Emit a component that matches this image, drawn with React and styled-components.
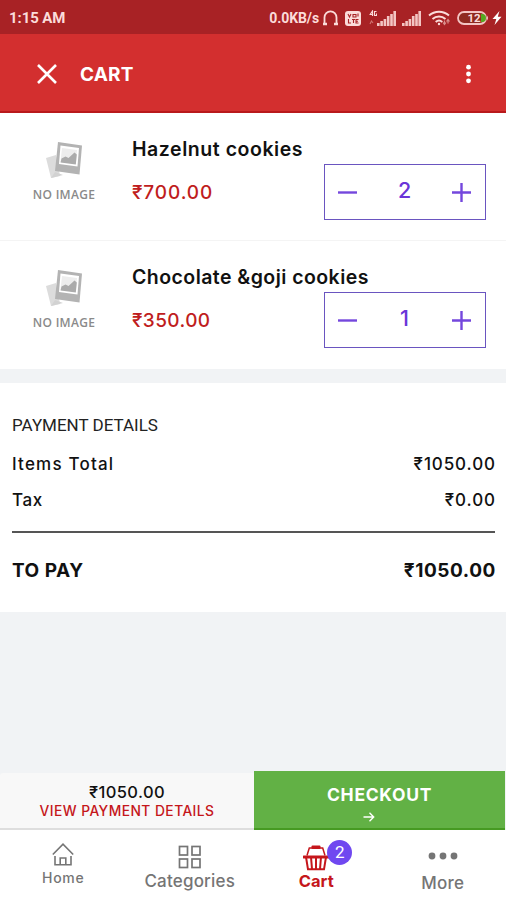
import React, { useState } from 'react';
import styled, { createGlobalStyle } from 'styled-components';

const GlobalStyle = createGlobalStyle`
  * { box-sizing: border-box; }
  body {
    margin: 0;
    background-color: #f1f3f5;
    font-family: Inter, 'Liberation Sans', sans-serif;
    color: #111;
  }
  button {
    padding: 0;
    border: 0;
    background: none;
    font-family: inherit;
    color: inherit;
  }
  svg { display: block; flex: none; }
`;

const Page = styled.div`
  width: 506px;
  height: 900px;
  display: flex;
  flex-direction: column;
  overflow: hidden;
  white-space: nowrap;
`;

/* status bar */
const StatusBar = styled.div`
  height: 34px;
  padding: 2px 4px 0 9px;
  display: flex;
  align-items: center;
  justify-content: space-between;
  background-color: #a82225;
  color: #fbdcda;
  font-family: Roboto, sans-serif;
  font-weight: 700;
`;
const Clock = styled.span`
  font-size: 15px;
  letter-spacing: -0.1px;
`;
const StatusIcons = styled.div`
  display: flex;
  align-items: center;
`;
const Speed = styled.span`
  font-size: 14px;
  letter-spacing: -0.1px;
  margin-right: 3px;
`;
const StatusIcon = styled.svg`
  margin-right: ${props => props.$gap || 0}px;
`;

/* header */
const Header = styled.header`
  height: 79px;
  padding: 2px 28px 0 37px;
  display: flex;
  align-items: center;
  background-color: #d32f2f;
  border-bottom: 2px solid #b9191c;
  color: #fff;
`;
const HeaderTitle = styled.h1`
  flex: 1;
  margin: 0 0 0 23px;
  padding-top: 1px;
  font-size: 19px;
  font-weight: 700;
  letter-spacing: 0.2px;
`;

/* cart items */
const Item = styled.div`
  height: 128px;
  display: flex;
  background-color: #fff;
  border-bottom: 1px solid ${props => (props.$last ? '#fff' : '#f4f4f4')};
`;
const Thumb = styled.div`
  width: 132px;
  padding: 29px 4px 0 0;
  display: flex;
  flex-direction: column;
  align-items: center;
  gap: 7px;
`;
const NoImage = styled.span`
  font-family: 'Open Sans', sans-serif;
  font-size: 12px;
  line-height: 18px;
  font-weight: 600;
  letter-spacing: 0.3px;
  color: #8a8a8a;
`;
const ItemBody = styled.div`
  flex: 1;
  padding: 23px 20px 0 0;
`;
const ItemName = styled.div`
  height: 28px;
  padding-top: 1px;
  line-height: 24px;
  font-size: 19.5px;
  font-weight: 600;
  letter-spacing: ${props => props.$ls}px;
`;
const ItemRow = styled.div`
  display: flex;
  align-items: center;
  justify-content: space-between;
`;
const Price = styled.span`
  font-size: 19px;
  font-weight: 500;
  letter-spacing: ${props => props.$ls}px;
  color: #bf1d20;
`;
const Stepper = styled.div`
  width: 162px;
  height: 56px;
  padding: 0 13px 0 12px;
  display: flex;
  align-items: center;
  justify-content: space-between;
  border: 1.5px solid #6a55c0;
  color: #7447dd;
`;
const Count = styled.span`
  padding-bottom: 4px;
  font-size: 21.5px;
  line-height: 26px;
  font-weight: 500;
  color: #6a35d8;
`;

/* payment */
const Payment = styled.section`
  height: 229px;
  margin-top: 14px;
  padding: 30px 11px 0 12px;
  background-color: #fff;
`;
const PaymentTitle = styled.h2`
  margin: 0 0 9px;
  font-family: Roboto, sans-serif;
  font-size: 17px;
  line-height: 24px;
  font-weight: 400;
  color: #222;
`;
const PaymentRow = styled.div`
  display: flex;
  align-items: center;
  justify-content: space-between;
  height: 36px;
  font-size: 17px;
  font-weight: 500;
  letter-spacing: 0.9px;
`;
const PaymentLabel = styled.span`
  letter-spacing: ${props => props.$ls}px;
`;
const PaymentAmount = styled.span`
  margin-right: -0.9px;
`;
const Line = styled.div`
  height: 2px;
  margin: 13px 0 19px;
  background-color: #555;
`;
const TotalRow = styled(PaymentRow)`
  font-size: 19px;
  font-weight: 700;
  letter-spacing: 0.55px;
`;

/* bottom */
const Bottom = styled.div`
  height: 59px;
  margin-top: auto;
  padding-right: 1px;
  display: flex;
  align-items: flex-end;
`;
const Summary = styled.div`
  width: 254px;
  height: 57px;
  padding-top: 9px;
  display: flex;
  flex-direction: column;
  align-items: center;
  background-color: #f8f8f8;
  border-bottom: 2px solid #dedede;
  border-top-left-radius: 3px;
`;
const SummaryPrice = styled.span`
  font-size: 16.5px;
  line-height: 21px;
  font-weight: 500;
  letter-spacing: 0.4px;
`;
const ViewDetails = styled.button`
  font-size: 13.8px;
  line-height: 17px;
  font-weight: 500;
  letter-spacing: 0.45px;
  color: #c5161b;
`;
const Checkout = styled.button`
  flex: 1;
  height: 59px;
  padding-top: 12px;
  display: flex;
  flex-direction: column;
  align-items: center;
  gap: 5px;
  background-color: #62b145;
  border-bottom: 2px solid #469a22;
  color: #fff;
  font-size: 17.5px;
  line-height: 24px;
  font-weight: 700;
  letter-spacing: 0.7px;
`;
const CheckoutArrow = styled.svg`
  margin-right: 22px;
`;

const Nav = styled.nav`
  height: 70px;
  display: grid;
  grid-template-columns: repeat(4, 1fr);
  background-color: #fff;
`;
const NavItem = styled.button`
  display: flex;
  flex-direction: column;
  align-items: center;
  padding-top: ${props => props.$top}px;
  color: ${props => (props.$active ? '#c5161b' : '#757575')};
`;
const NavLabel = styled.span`
  margin-top: ${props => props.$gap}px;
  font-size: ${props => props.$size || 17}px;
  line-height: 20px;
  font-weight: ${props => props.$weight || 500};
  letter-spacing: ${props => props.$ls || 0}px;
`;
const CartIcon = styled.div`
  position: relative;
`;
const Badge = styled.span`
  position: absolute;
  left: 24px;
  top: -5px;
  width: 25px;
  height: 25px;
  border-radius: 50%;
  background-color: #7048f0;
  color: #fff;
  font-family: Roboto, sans-serif;
  font-size: 17px;
  line-height: 25px;
  text-align: center;
`;

const Signal = ({ gap }) => (
  <StatusIcon $gap={gap} width="19" height="15" viewBox="0 0 19 15" fill="#f3c5c3">
    <rect x="0" y="12" width="2.6" height="3" />
    <rect x="3.3" y="10" width="2.6" height="5" />
    <rect x="6.6" y="8" width="2.6" height="7" />
    <rect x="9.9" y="5" width="2.6" height="10" />
    <rect x="13.2" y="3" width="2.6" height="12" />
    <rect x="16.4" y="0" width="2.6" height="15" />
  </StatusIcon>
);

const Placeholder = () => (
  <svg width="38" height="37" viewBox="0 0 38 37">
    <path d="M1 16l10-3 4 21-9 2z" fill="#dcdcdc" />
    <path d="M6 36l12-3-8-3z" fill="#d2d2d2" />
    <path d="M13 0l24 3.500-2.500 29L10 29z" fill="#b3b3b3" />
    <path d="M15.500 3.500l18.500 2.400-1.500 18.500-18.500-2.400z" fill="#fff" />
    <path d="M17 6l15 2-1.200 14-15.300-2z" fill="#ededed" />
    <path d="M15.500 20.500l1-4 4-2 3 1.500 6-5.500 2.300 2-1 10z" fill="#ababab" />
  </svg>
);

const items = [
  { id: 1, name: 'Hazelnut cookies', price: '₹700.00', count: 2, ls: 0.55, priceLs: 0.9 },
  { id: 2, name: 'Chocolate &goji cookies', price: '₹350.00', count: 1, ls: 0.45, priceLs: 0.4 },
];

const CartItem = ({ data, last }) => {
  const [count, setCount] = useState(data.count);

  return (
    <Item $last={last}>
      <Thumb>
        <Placeholder />
        <NoImage>NO IMAGE</NoImage>
      </Thumb>
      <ItemBody>
        <ItemName $ls={data.ls}>{data.name}</ItemName>
        <ItemRow>
          <Price $ls={data.priceLs}>{data.price}</Price>
          <Stepper>
            <button aria-label="minus" onClick={() => setCount(Math.max(0, count - 1))}>
              <svg width="21" height="21" viewBox="0 0 21 21" stroke="currentColor" strokeWidth="2.4">
                <path d="M1 10.5h19" />
              </svg>
            </button>
            <Count>{count}</Count>
            <button aria-label="plus" onClick={() => setCount(count + 1)}>
              <svg width="21" height="21" viewBox="0 0 21 21" stroke="currentColor" strokeWidth="2.4">
                <path d="M1 10.5h19M10.5 1v19" />
              </svg>
            </button>
          </Stepper>
        </ItemRow>
      </ItemBody>
    </Item>
  );
};

const App = () => {
  return (
    <Page>
      <GlobalStyle />
      <StatusBar>
        <Clock>1:15 AM</Clock>
        <StatusIcons>
          <Speed>0.0KB/s</Speed>
          {/* headphones */}
          <StatusIcon $gap={6} width="17" height="16" viewBox="0 0 17 16" fill="none" stroke="#fbdcda" strokeWidth="1.8">
            <path d="M2.500 13V7.500a6 6.200 0 0 1 12 0V13" />
            <path d="M1 14h4M12 14h4" strokeWidth="2.6" />
          </StatusIcon>
          {/* volte */}
          <StatusIcon $gap={8} width="16" height="15" viewBox="0 0 16 15">
            <rect width="16" height="15" rx="3" fill="#fbdcda" />
            <path d="M3 3l1.500 3L6 3M8 3.500h3v2.500H8zM13 2.500v3M3.500 8v4H6M7 8.500h3M8.500 8.500V12M13.500 8.500H11V12h2.500M11 10.200h2" fill="none" stroke="#a82225" strokeWidth="1.1" />
          </StatusIcon>
          <StatusIcon $gap={0} width="8" height="17" viewBox="0 0 8 17" fill="none" stroke="#fbdcda" strokeWidth="1.1">
            <path d="M3.500 6V1L1.200 4.500h3M7.500 1.500H5.500v4h2V3.500" />
            <path d="M1 14l1.500-3L4 13" stroke="#d07573" />
          </StatusIcon>
          <Signal gap={6} />
          <Signal gap={7} />
          {/* wifi */}
          <StatusIcon $gap={6} width="23" height="16" viewBox="0 0 23 16" fill="none" stroke="#fbdcda" strokeWidth="2">
            <path d="M1 5.500a15 15 0 0 1 20 0M4.500 9a10 10 0 0 1 13 0M7.700 12a5 5 0 0 1 6.600 0" />
            <circle cx="11" cy="14" r="1.2" fill="#fbdcda" stroke="none" />
            <path d="M16.500 14.500v-4M20 9.500v4M15 12.500l1.500 2 1.500-2M18.500 11.500l1.500-2 1.500 2" stroke="#d98f8c" strokeWidth="1.2" />
          </StatusIcon>
          {/* battery */}
          <StatusIcon $gap={3} width="32" height="14" viewBox="0 0 32 14">
            <rect x="1" y="1" width="28" height="12" rx="6" fill="#8f2a20" stroke="#f3c5c3" strokeWidth="1.8" />
            <path d="M24 3h1a4 4 0 0 1 0 8h-1z" fill="#55a820" />
            <path d="M30 4.500q2 2.500 0 5z" fill="#f3c5c3" />
            <text x="17" y="11" fontSize="11.5" fontWeight="700" textAnchor="middle" fill="#fbdcda" fontFamily="Roboto">12</text>
          </StatusIcon>
          <StatusIcon width="10" height="14" viewBox="0 0 10 14" fill="#fff">
            <path d="M7.500 0L0.500 8h3.800L2.500 14 9.500 5.800H5.800z" />
          </StatusIcon>
        </StatusIcons>
      </StatusBar>

      <Header>
        <svg width="20" height="20" viewBox="0 0 20 20" stroke="#fff" strokeWidth="2.6">
          <path d="M1 1l18 18M19 1L1 19" />
        </svg>
        <HeaderTitle>CART</HeaderTitle>
        <svg width="20" height="20" viewBox="0 0 20 20" fill="#fff">
          <circle cx="10.5" cy="3.2" r="2.4" />
          <circle cx="10.5" cy="10" r="2.4" />
          <circle cx="10.5" cy="16.8" r="2.4" />
        </svg>
      </Header>

      {items.map((item, i) => (
        <CartItem key={item.id} data={item} last={i === items.length - 1} />
      ))}

      <Payment>
        <PaymentTitle>PAYMENT DETAILS</PaymentTitle>
        <PaymentRow>
          <PaymentLabel $ls={1.2}>Items Total</PaymentLabel>
          <PaymentAmount>₹1050.00</PaymentAmount>
        </PaymentRow>
        <PaymentRow>
          <PaymentLabel $ls={0.6}>Tax</PaymentLabel>
          <PaymentAmount>₹0.00</PaymentAmount>
        </PaymentRow>
        <Line />
        <TotalRow>
          <PaymentLabel $ls={0.5}>TO PAY</PaymentLabel>
          <PaymentAmount>₹1050.00</PaymentAmount>
        </TotalRow>
      </Payment>

      <Bottom>
        <Summary>
          <SummaryPrice>₹1050.00</SummaryPrice>
          <ViewDetails>VIEW PAYMENT DETAILS</ViewDetails>
        </Summary>
        <Checkout>
          CHECKOUT
          <CheckoutArrow width="12" height="10" viewBox="0 0 12 10" fill="none" stroke="#fff" strokeWidth="1.4">
            <path d="M0.500 5h10M6.500 0.800L10.700 5 6.500 9.200" />
          </CheckoutArrow>
        </Checkout>
      </Bottom>

      <Nav>
        <NavItem $top={13}>
          <svg width="22" height="23" viewBox="0 0 22 23" fill="none" stroke="currentColor" strokeWidth="1.6">
            <path d="M0.800 11.500L11 1.200l10.200 10.300" />
            <path d="M3 13v8.700h16V13M8.200 21.700V15h5.600v6.700" />
          </svg>
          <NavLabel $gap={2} $size={14} $ls={0.7}>Home</NavLabel>
        </NavItem>
        <NavItem $top={15}>
          <svg width="24" height="24" viewBox="0 0 24 24" fill="none" stroke="currentColor" strokeWidth="1.7">
            <rect x="1.5" y="1.5" width="8" height="8.5" />
            <rect x="14" y="1.5" width="8" height="8.5" />
            <rect x="1.5" y="14" width="8" height="8.5" />
            <rect x="14" y="14" width="8" height="8.5" />
          </svg>
          <NavLabel $gap={2} $ls={0.2}>Categories</NavLabel>
        </NavItem>
        <NavItem $top={15} $active>
          <CartIcon>
            <svg width="26" height="26" viewBox="0 0 26 26" fill="currentColor">
              <path d="M4 10.500L6.300 3h13.400L22 10.500" fill="none" stroke="currentColor" strokeWidth="1.5" />
              <rect x="8.5" y="0.5" width="9" height="3.6" rx="1" />
              <rect x="0" y="10.5" width="26" height="3" rx="0.5" />
              <path d="M3 12l2 12.300h16L23 12M8 12l1 12M13 12v12M18 12l-1 12" fill="none" stroke="currentColor" strokeWidth="2" />
            </svg>
            <Badge>2</Badge>
          </CartIcon>
          <NavLabel $gap={0} $weight={700} $size={16.5}>Cart</NavLabel>
        </NavItem>
        <NavItem $top={22}>
          <svg width="30" height="8" viewBox="0 0 30 8" fill="currentColor">
            <circle cx="4" cy="4" r="3.4" />
            <circle cx="15" cy="4" r="3.4" />
            <circle cx="26" cy="4" r="3.4" />
          </svg>
          <NavLabel $gap={13} $ls={0.2}>More</NavLabel>
        </NavItem>
      </Nav>
    </Page>
  );
};

export default App;
